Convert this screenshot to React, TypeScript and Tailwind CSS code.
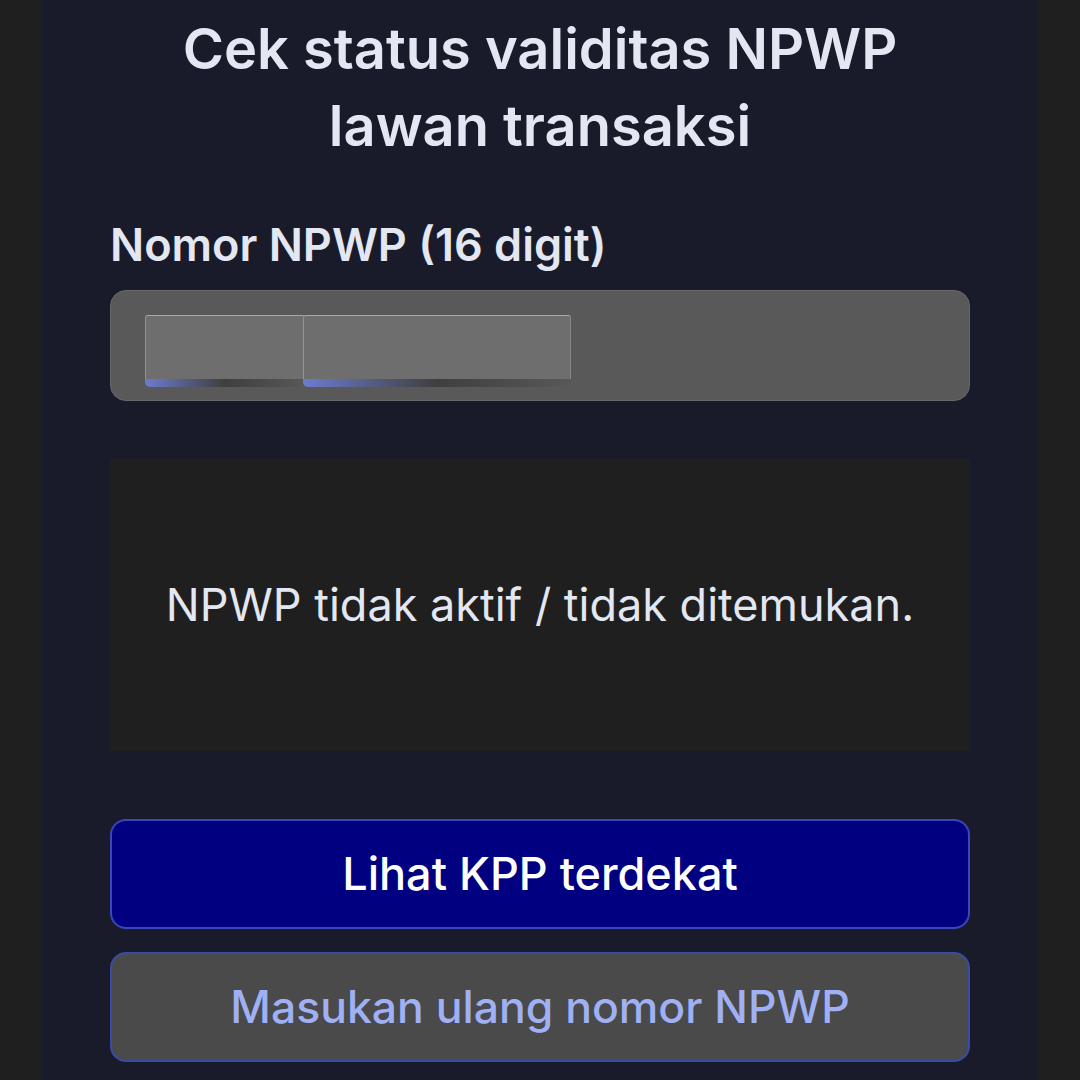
const font = { fontFamily: 'Inter, "Noto Sans", sans-serif' };

function InputBlock({ className }: { className: string }) {
  return (
    <div className={className}>
      <div className="h-[64px] rounded-t-[3px] border border-b-0 border-t-[#9aa6d6] border-l-[#8290d0] border-r-[#888888] bg-[#6e6e6e]" />
      <div className="h-[8px] rounded-b-[5px] bg-gradient-to-r from-[#6d7bd0] via-[#3f3f3f] to-[#585858]" />
    </div>
  );
}

export default function App() {
  return (
    <div className="flex min-h-[1080px] w-[1080px] bg-[#1f1f1f]" style={font}>
      <div className="ml-[42px] w-[996px] bg-[#1a1b2a] px-[68px] pt-[11px]">
        <h1 className="text-center text-[56px] font-semibold leading-[77px] text-[#e2e7f2]">
          Cek status validitas NPWP
          <br />
          lawan transaksi
        </h1>

        <label className="mt-[53px] block text-[45px] font-semibold leading-[54px] text-[#e2e7f2]">
          Nomor NPWP (16 digit)
        </label>

        <div className="mt-[18px] flex h-[111px] items-start rounded-[16px] border border-[#686868] bg-[#595959] px-[34px] pt-[24px]">
          <InputBlock className="w-[160px]" />
          <InputBlock className="-ml-[2px] w-[268px]" />
        </div>

        <div className="mt-[58px] flex h-[292px] items-center justify-center bg-[#1f1f1f]">
          <p className="text-[45px] font-normal text-[#e2e7f2]">NPWP tidak aktif / tidak ditemukan.</p>
        </div>

        <button
          type="button"
          className="mt-[68px] flex h-[110px] w-full items-center justify-center rounded-[16px] border-2 border-[#3a47b8] bg-[#000080] text-[45px] font-medium text-white"
        >
          Lihat KPP terdekat
        </button>
        <button
          type="button"
          className="mt-[23px] flex h-[110px] w-full items-center justify-center rounded-[16px] border-2 border-[#3a4aa8] bg-[#4a4a4a] text-[44.5px] font-medium text-[#9fb0f4]"
        >
          Masukan ulang nomor NPWP
        </button>
      </div>
    </div>
  );
}
